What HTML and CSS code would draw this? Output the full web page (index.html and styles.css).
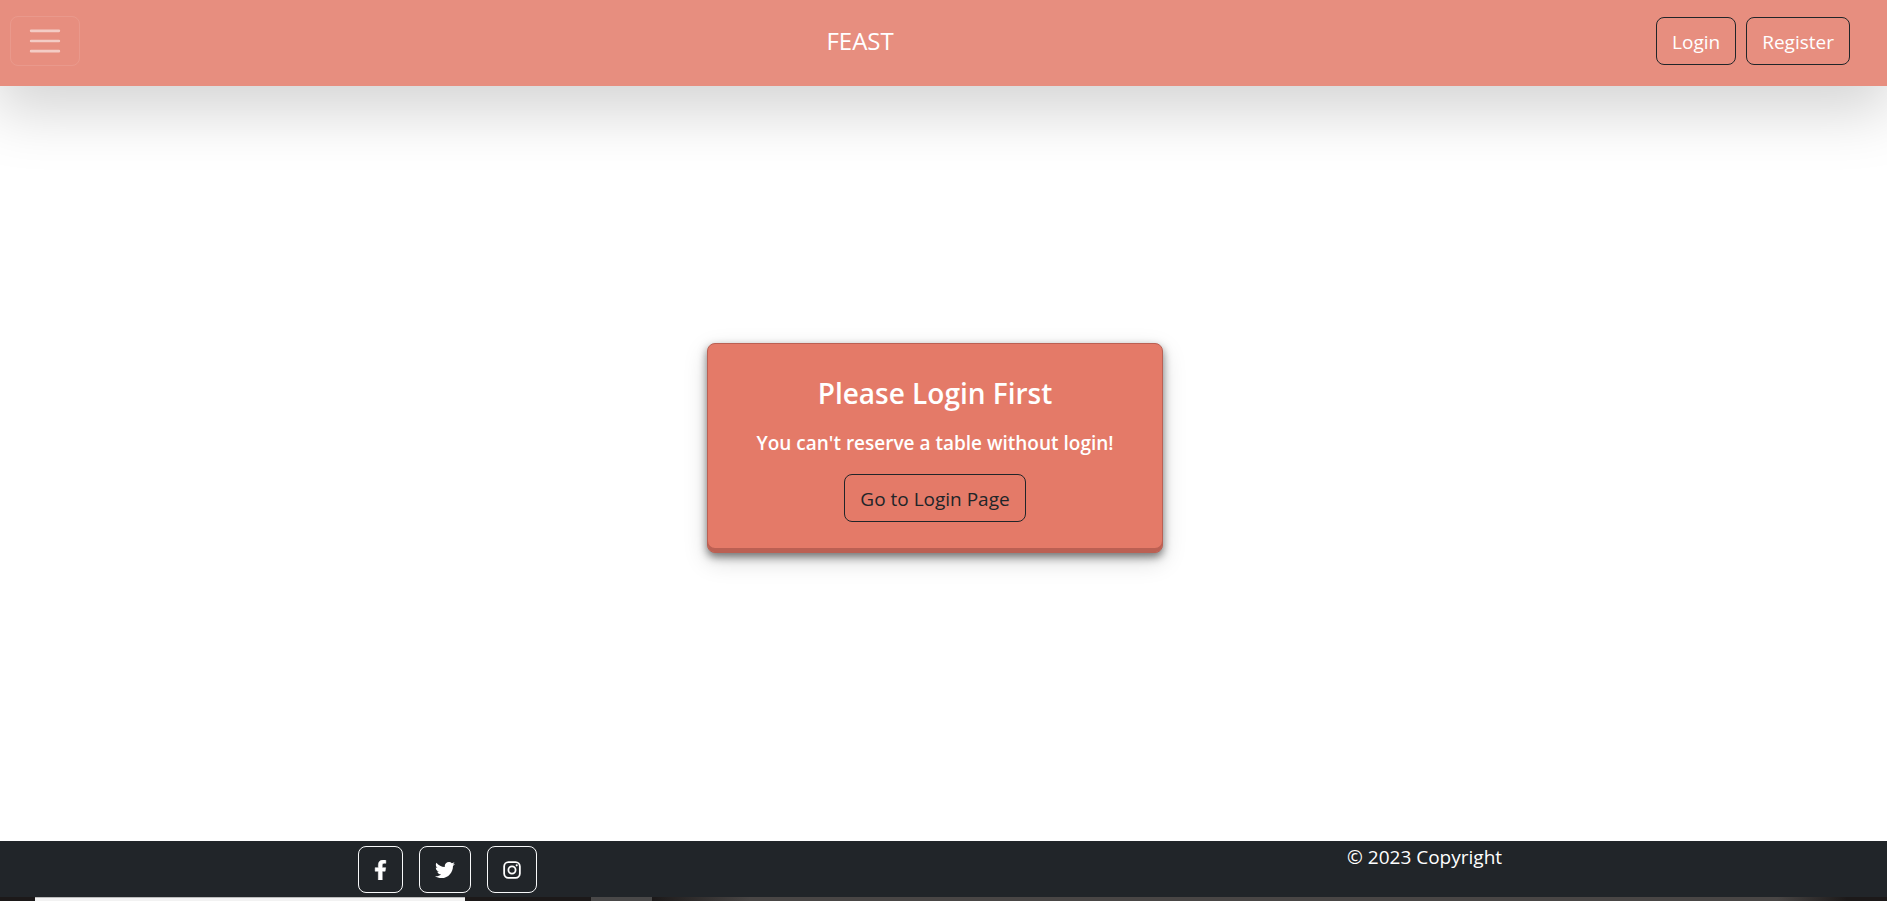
FILE: index.html
```html
<!DOCTYPE html>
<html lang="en">
<head>
<meta charset="utf-8">
<title>Feast</title>
<link rel="stylesheet" href="styles.css">
</head>
<body>
<header class="navbar">
  <button class="toggler" type="button" aria-label="Toggle navigation">
    <svg viewBox="0 0 30 30" width="38" height="38" aria-hidden="true"><path d="M4 7h22M4 15h22M4 23h22" fill="none" stroke="currentColor" stroke-width="2" stroke-linecap="round"/></svg>
  </button>
  <a class="brand" href="#">FEAST</a>
  <nav class="actions">
    <a class="btn btn-light-text" href="#">Login</a>
    <a class="btn btn-light-text" href="#">Register</a>
  </nav>
</header>
<main class="main">
  <section class="card">
    <h1 class="card-title">Please Login First</h1>
    <p class="card-text">You can't reserve a table without login!</p>
    <a class="btn" href="#">Go to Login Page</a>
  </section>
</main>
<footer class="footer">
  <div class="socials">
    <a class="social" href="#" aria-label="Facebook"><svg viewBox="0 0 320 512" width="13" height="20" aria-hidden="true"><path fill="currentColor" stroke="currentColor" stroke-width="12" d="M279.14 288l14.22-92.66h-88.91v-60.13c0-25.35 12.42-50.06 52.24-50.06h40.42V6.26S260.43 0 225.36 0c-73.22 0-121.08 44.38-121.08 124.72v70.62H22.89V288h81.39v224h100.17V288z"/></svg></a>
    <a class="social" href="#" aria-label="Twitter"><svg viewBox="0 0 512 512" height="20" aria-hidden="true"><path fill="currentColor" d="M459.37 151.716c.325 4.548.325 9.097.325 13.645 0 138.72-105.583 298.558-298.558 298.558-59.452 0-114.68-17.219-161.137-47.106 8.447.974 16.568 1.299 25.34 1.299 49.055 0 94.213-16.568 130.274-44.832-46.132-.975-84.792-31.188-98.112-72.772 6.498.974 12.995 1.624 19.818 1.624 9.421 0 18.843-1.3 27.614-3.573-48.081-9.747-84.143-51.98-84.143-102.985v-1.299c13.969 7.797 30.214 12.67 47.431 13.319-28.264-18.843-46.781-51.005-46.781-87.391 0-19.492 5.197-37.36 14.294-52.954 51.655 63.675 129.3 105.258 216.365 109.807-1.624-7.797-2.599-15.918-2.599-24.04 0-57.828 46.782-104.934 104.934-104.934 30.213 0 57.502 12.67 76.67 33.137 23.715-4.548 46.456-13.32 66.599-25.34-7.798 24.366-24.366 44.833-46.132 57.827 21.117-2.273 41.584-8.122 60.426-16.243-14.292 20.791-32.161 39.308-52.628 54.253z"/></svg></a>
    <a class="social" href="#" aria-label="Instagram"><svg viewBox="0 0 448 512" width="18" height="20" aria-hidden="true"><g fill="none" stroke="currentColor" stroke-width="46"><rect x="23" y="55" width="402" height="402" rx="110"/><circle cx="224" cy="256" r="92"/></g><circle cx="344" cy="136" r="28" fill="currentColor"/></svg></a>
  </div>
  <p class="copyright">© 2023 Copyright</p>
</footer>
<div class="edge" aria-hidden="true"></div>
</body>
</html>
```
FILE: styles.css
```css
* { box-sizing: border-box; }

body {
  margin: 0;
  min-height: 100vh;
  display: flex;
  flex-direction: column;
  background: #fff;
  color: #212529;
  font: 19px/30px "Segoe UI", "Open Sans", "Noto Sans", sans-serif;
}

a { color: inherit; text-decoration: none; }

.navbar {
  display: flex;
  align-items: center;
  justify-content: space-between;
  padding: 16px 37px 20px 10px;
  background: #e78e7f;
  color: #fff;
  box-shadow: 0 20px 60px 6px rgba(0, 0, 0, 0.17);
}

.toggler {
  display: flex;
  align-items: center;
  justify-content: center;
  width: 70px;
  height: 50px;
  padding: 0;
  border: 1px solid rgba(255, 255, 255, 0.1);
  border-radius: 8px;
  background: transparent;
  color: rgba(255, 255, 255, 0.55);
}

.brand { margin-right: 16px; font-size: 24px; }

.actions { display: flex; gap: 10px; }

.btn {
  display: inline-block;
  padding: 9px 15px 7px;
  border: 1px solid #212529;
  border-radius: 8px;
}

.btn-light-text { color: #fff; }

.main {
  flex: 1;
  display: flex;
  align-items: center;
  justify-content: center;
  padding: 0 17px 32px 0;
}

.card {
  padding: 29px 48px 30px;
  border: 1px solid #bb6053;
  border-radius: 8px;
  background: #e47a68;
  text-align: center;
  box-shadow:
    inset 0 -4px 0 #bb6053,
    0 4px 8px rgba(0, 0, 0, 0.5),
    0 8px 24px rgba(0, 0, 0, 0.15);
}

.card-title {
  margin: 0 0 15px;
  color: #fff;
  font-size: 28px;
  font-weight: 600;
  line-height: 40px;
}

.card-text { margin: 0 0 16px; color: #fff; font-weight: 600; }

.footer {
  display: flex;
  justify-content: space-between;
  padding: 0 20.4% 0 18.95%;
  background: #212529;
  color: #fff;
}

.socials { display: flex; gap: 16px; padding: 5px 0 4px; }

.social {
  display: flex;
  align-items: center;
  height: 47px;
  padding: 0 15px;
  border: 1px solid #f8f9fa;
  border-radius: 8px;
}

.copyright { margin: 0; padding-top: 1px; }

.edge {
  height: 4px;
  background:
    linear-gradient(#bbb 1px, #f2f2f2 1px) 35px 0 / 430px 4px no-repeat,
    linear-gradient(#494848, #494848) 591px 0 / 61px 4px no-repeat,
    linear-gradient(90deg, #1c1919 652px, #494645 750px, #494645 calc(100% - 110px), #1c1919 calc(100% - 40px));
}
```
